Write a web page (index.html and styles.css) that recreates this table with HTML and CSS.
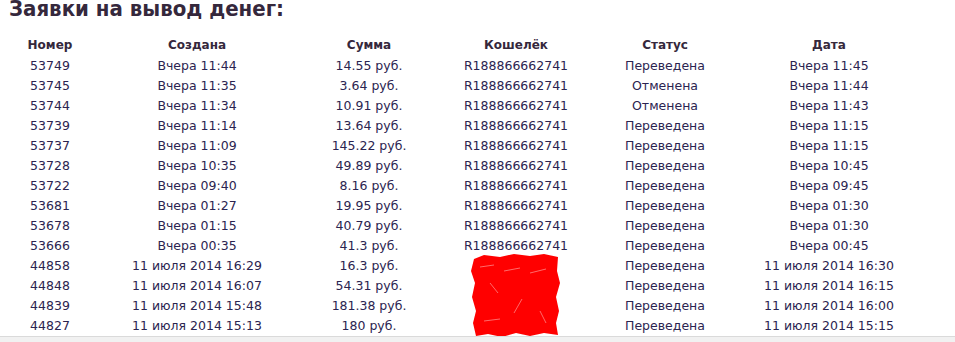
FILE: index.html
```html
<!DOCTYPE html>
<html lang="ru">
<head>
<meta charset="utf-8">
<link rel="stylesheet" href="styles.css">
</head>
<body>
<div class="page">
  <h2 class="title">Заявки на вывод денег:</h2>
  <table class="payouts">
    <colgroup>
      <col class="c1"><col class="c2"><col class="c3"><col class="c4"><col class="c5"><col class="c6">
    </colgroup>
    <thead>
      <tr><th>Номер</th><th>Создана</th><th>Сумма</th><th>Кошелёк</th><th>Статус</th><th>Дата</th></tr>
    </thead>
    <tbody>
      <tr><td>53749</td><td>Вчера 11:44</td><td>14.55 руб.</td><td>R188866662741</td><td>Переведена</td><td>Вчера 11:45</td></tr>
      <tr><td>53745</td><td>Вчера 11:35</td><td>3.64 руб.</td><td>R188866662741</td><td>Отменена</td><td>Вчера 11:44</td></tr>
      <tr><td>53744</td><td>Вчера 11:34</td><td>10.91 руб.</td><td>R188866662741</td><td>Отменена</td><td>Вчера 11:43</td></tr>
      <tr><td>53739</td><td>Вчера 11:14</td><td>13.64 руб.</td><td>R188866662741</td><td>Переведена</td><td>Вчера 11:15</td></tr>
      <tr><td>53737</td><td>Вчера 11:09</td><td>145.22 руб.</td><td>R188866662741</td><td>Переведена</td><td>Вчера 11:15</td></tr>
      <tr><td>53728</td><td>Вчера 10:35</td><td>49.89 руб.</td><td>R188866662741</td><td>Переведена</td><td>Вчера 10:45</td></tr>
      <tr><td>53722</td><td>Вчера 09:40</td><td>8.16 руб.</td><td>R188866662741</td><td>Переведена</td><td>Вчера 09:45</td></tr>
      <tr><td>53681</td><td>Вчера 01:27</td><td>19.95 руб.</td><td>R188866662741</td><td>Переведена</td><td>Вчера 01:30</td></tr>
      <tr><td>53678</td><td>Вчера 01:15</td><td>40.79 руб.</td><td>R188866662741</td><td>Переведена</td><td>Вчера 01:30</td></tr>
      <tr><td>53666</td><td>Вчера 00:35</td><td>41.3 руб.</td><td>R188866662741</td><td>Переведена</td><td>Вчера 00:45</td></tr>
      <tr><td>44858</td><td>11 июля 2014 16:29</td><td>16.3 руб.</td><td class="wallet"><svg class="redact" viewBox="0 0 92 84" width="92" height="84"><path d="M4 6 L14 2 L30 4 L44 1 L60 3 L74 1 L88 4 L87 18 L90 30 L86 44 L89 58 L86 70 L88 82 L74 80 L60 83 L46 80 L32 84 L18 81 L6 83 L3 70 L6 58 L2 44 L5 30 L1 18 Z" fill="#ff0000"/><path d="M10 14 L24 12 M34 18 L50 15 M60 20 L76 16 M20 30 L28 40 M52 46 L44 60 M70 58 L76 70 M14 68 L30 66" stroke="#ff6a6a" stroke-width="1" fill="none"/></svg></td><td>Переведена</td><td>11 июля 2014 16:30</td></tr>
      <tr><td>44848</td><td>11 июля 2014 16:07</td><td>54.31 руб.</td><td></td><td>Переведена</td><td>11 июля 2014 16:15</td></tr>
      <tr><td>44839</td><td>11 июля 2014 15:48</td><td>181.38 руб.</td><td></td><td>Переведена</td><td>11 июля 2014 16:00</td></tr>
      <tr><td>44827</td><td>11 июля 2014 15:13</td><td>180 руб.</td><td></td><td>Переведена</td><td>11 июля 2014 15:15</td></tr>
    </tbody>
  </table>
</div>
<div class="bottombar"></div>
</body>
</html>
```
FILE: styles.css
```css
html, body {
  margin: 0;
  padding: 0;
  background: #ffffff;
  overflow: hidden;
}
body {
  height: 342px;
  display: flex;
  flex-direction: column;
  font-family: "DejaVu Sans", Verdana, sans-serif;
  color: #2b2450;
}
.page {
  flex: 1;
  padding: 0 0 0 8px;
  overflow: hidden;
}
.title {
  margin: -3px 0 0 1px;
  font-family: "DejaVu Sans Condensed", "DejaVu Sans", sans-serif;
  font-size: 22px;
  line-height: 24px;
  font-weight: bold;
  color: #35283c;
}
.payouts {
  border-collapse: collapse;
  table-layout: fixed;
  width: 916px;
  margin-top: 14px;
  font-size: 12.5px;
}
.c1 { width: 84px; }
.c2 { width: 210px; }
.c3 { width: 134px; }
.c4 { width: 160px; }
.c5 { width: 138px; }
.c6 { width: 190px; }
.payouts th {
  font-weight: bold;
  font-size: 12px;
  color: #35283c;
  height: 20px;
  padding: 0;
  text-align: center;
}
.payouts td {
  height: 20px;
  padding: 0;
  text-align: center;
  white-space: nowrap;
}
.wallet {
  position: relative;
}
.redact {
  position: absolute;
  left: 34px;
  top: -2px;
  display: block;
}
.bottombar {
  height: 5px;
  background: #f1f1f1;
  border-top: 1px solid #dadada;
}
```
